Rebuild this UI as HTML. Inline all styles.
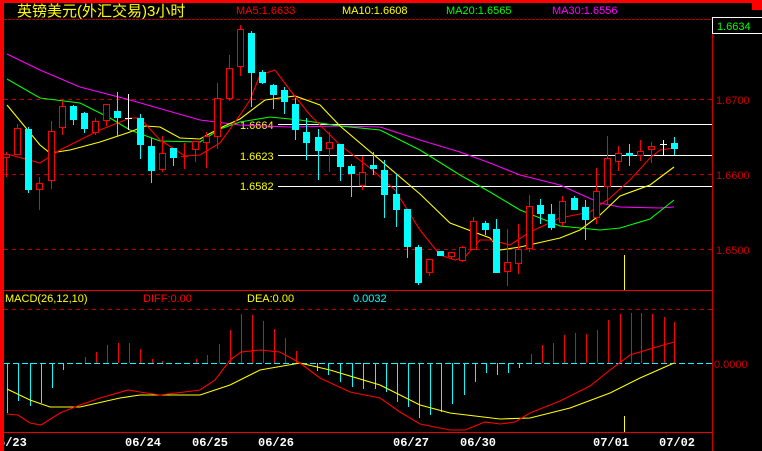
<!DOCTYPE html>
<html><head><meta charset="utf-8"><style>
html,body{margin:0;padding:0;background:#000;width:762px;height:451px;overflow:hidden}
svg{display:block}
text{font-family:"Liberation Sans","Noto Sans CJK SC",sans-serif;font-size:11px}
.d{font-family:"Liberation Mono",monospace;font-weight:bold;font-size:12px;fill:#fff}
</style></head><body>
<svg width="762" height="451" viewBox="0 0 762 451" shape-rendering="crispEdges">
<rect width="762" height="451" fill="#000"/>
<rect x="0" y="0" width="762" height="3" fill="#f00"/>
<rect x="0" y="0" width="4" height="451" fill="#f00"/>
<rect x="752" y="0" width="10" height="10" fill="#f00"/>
<text x="17" y="16" style="font-size:15px" fill="#ff0">英镑美元(外汇交易)3小时</text>
<text x="236" y="14" fill="#f00">MA5:1.6633</text>
<text x="342" y="14" fill="#ff0">MA10:1.6608</text>
<text x="446" y="14" fill="#0f0">MA20:1.6565</text>
<text x="552" y="14" fill="#f0f">MA30:1.6556</text>
<line x1="4" y1="19.5" x2="712" y2="19.5" stroke="#a00" stroke-dasharray="3,1"/>
<line x1="712.5" y1="19" x2="712.5" y2="451" stroke="#c00"/>
<rect x="712.5" y="17.5" width="50" height="16" fill="#000" stroke="#fff"/>
<text x="717" y="30" fill="#0f0">1.6634</text>
<g stroke="#b00" stroke-dasharray="4,4">
<line x1="4" y1="99.5" x2="712" y2="99.5"/><line x1="4" y1="174.5" x2="712" y2="174.5"/><line x1="4" y1="249.5" x2="712" y2="249.5"/>
<line x1="4" y1="309.5" x2="712" y2="309.5"/>
</g>
<text x="716" y="104" fill="#c00">1.6700</text>
<text x="716" y="179" fill="#c00">1.6600</text>
<text x="716" y="254" fill="#c00">1.6500</text>
<g stroke="#fff"><line x1="278" y1="124.5" x2="712" y2="124.5"/><line x1="278" y1="155.5" x2="712" y2="155.5"/><line x1="278" y1="186.5" x2="712" y2="186.5"/></g>
<text x="240" y="129" fill="#ff0">1.6664</text>
<text x="240" y="160" fill="#ff0">1.6623</text>
<text x="240" y="190" fill="#ff0">1.6582</text>
<line x1="4" y1="290.5" x2="712" y2="290.5" stroke="#e00"/>
<line x1="4" y1="432.5" x2="712" y2="432.5" stroke="#e00"/>
<line x1="624.5" y1="255" x2="624.5" y2="290" stroke="#ff0"/>
<line x1="624.5" y1="416" x2="624.5" y2="432" stroke="#ff0"/>
<g shape-rendering="auto" fill="none" stroke-width="1.1">
<polyline stroke="#f0f" points="7,54 40,70 80,87 130,100 200,120 240,125 290,127 340,126 380,127 420,140 460,152 490,163 520,175 560,185 600,203 620,207 660,208 674,207"/>
<polyline stroke="#0f0" points="7,79 40,98 80,103 110,118 130,130 160,141 200,142 220,129 240,122 270,117 300,120 340,126 380,130 420,150 460,175 490,192 520,210 560,226 600,230 620,228 650,219 674,200"/>
<polyline stroke="#ff0" points="7,105 40,145 50,153 70,150 100,142 130,132 145,126 160,127 180,138 200,139 220,128 240,119 265,100 295,96 320,105 340,126 380,160 420,194 450,223 490,238 500,250 520,247 560,238 580,230 600,215 620,196 650,185 674,167"/>
<polyline stroke="#f00" points="7,154 40,163 60,150 100,130 130,118 140,118 160,140 185,156 200,155 220,143 240,115 250,100 260,75 275,70 290,90 310,115 340,145 370,168 395,190 420,230 440,255 455,260 465,257 480,240 490,240 510,245 530,232 560,218 590,212 610,198 630,180 650,158 660,150 674,148"/>
</g>
<g stroke="#f00" fill="#000">
<line x1="6.5" y1="152" x2="6.5" y2="177"/><rect x="3.5" y="154.5" width="6" height="3"/>
<line x1="17.5" y1="124" x2="17.5" y2="155"/><rect x="14.5" y="128.5" width="6" height="26"/>
<line x1="39.5" y1="177" x2="39.5" y2="210"/><rect x="36.5" y="183.5" width="6" height="6"/>
<line x1="51.5" y1="121" x2="51.5" y2="189"/><rect x="48.5" y="131.5" width="6" height="49"/>
<line x1="62.5" y1="101" x2="62.5" y2="135"/><rect x="59.5" y="106.5" width="6" height="21"/>
<line x1="95.5" y1="118" x2="95.5" y2="135"/><rect x="92.5" y="121.5" width="6" height="11"/>
<line x1="106.5" y1="104" x2="106.5" y2="126"/><rect x="103.5" y="104.5" width="6" height="16"/>
<line x1="162.5" y1="136" x2="162.5" y2="172"/><rect x="159.5" y="153.5" width="6" height="16"/>
<line x1="184.5" y1="143" x2="184.5" y2="169"/><line x1="181" y1="156.5" x2="188" y2="156.5"/>
<line x1="195.5" y1="141" x2="195.5" y2="162"/><rect x="192.5" y="141.5" width="6" height="8"/>
<line x1="206.5" y1="132" x2="206.5" y2="168"/><rect x="203.5" y="136.5" width="6" height="6"/>
<line x1="217.5" y1="83" x2="217.5" y2="149"/><rect x="214.5" y="98.5" width="6" height="38"/>
<line x1="229.5" y1="55" x2="229.5" y2="101"/><rect x="226.5" y="68.5" width="6" height="30"/>
<line x1="240.5" y1="25" x2="240.5" y2="76"/><rect x="237.5" y="29.5" width="6" height="37"/>
<line x1="329.5" y1="132" x2="329.5" y2="172"/><rect x="326.5" y="142.5" width="6" height="6"/>
<line x1="362.5" y1="156" x2="362.5" y2="190"/><rect x="359.5" y="172.5" width="6" height="13"/>
<line x1="429.5" y1="259" x2="429.5" y2="276"/><rect x="426.5" y="259.5" width="6" height="13"/>
<line x1="451.5" y1="252" x2="451.5" y2="259"/><rect x="448.5" y="252.5" width="6" height="4"/>
<line x1="462.5" y1="246" x2="462.5" y2="262"/><rect x="459.5" y="247.5" width="6" height="13"/>
<line x1="473.5" y1="217" x2="473.5" y2="250"/><rect x="470.5" y="221.5" width="6" height="28"/>
<line x1="507.5" y1="229" x2="507.5" y2="286"/><rect x="504.5" y="262.5" width="6" height="9"/>
<line x1="518.5" y1="224" x2="518.5" y2="274"/><rect x="515.5" y="249.5" width="6" height="14"/>
<line x1="529.5" y1="195" x2="529.5" y2="252"/><rect x="526.5" y="206.5" width="6" height="42"/>
<line x1="562.5" y1="196" x2="562.5" y2="226"/><rect x="559.5" y="201.5" width="6" height="21"/>
<line x1="596.5" y1="168" x2="596.5" y2="224"/><rect x="593.5" y="191.5" width="6" height="26"/>
<line x1="607.5" y1="136" x2="607.5" y2="205"/><rect x="604.5" y="158.5" width="6" height="28"/>
<line x1="618.5" y1="146" x2="618.5" y2="171"/><rect x="615.5" y="153.5" width="6" height="8"/>
<line x1="640.5" y1="140" x2="640.5" y2="161"/><rect x="637.5" y="151.5" width="6" height="4"/>
<line x1="651.5" y1="142" x2="651.5" y2="163"/><rect x="648.5" y="146.5" width="6" height="3"/>
</g>
<g stroke="#fff"><line x1="128.5" y1="94" x2="128.5" y2="130"/><line x1="125" y1="118.5" x2="132" y2="118.5"/>
<line x1="663.5" y1="140" x2="663.5" y2="155"/><line x1="660" y1="144.5" x2="667" y2="144.5"/></g>
<g stroke="#0ff" fill="#0ff">
<line x1="28.5" y1="127" x2="28.5" y2="193"/><rect x="25" y="129" width="7" height="61" stroke="none"/>
<line x1="73.5" y1="105" x2="73.5" y2="125"/><rect x="70" y="106" width="7" height="14" stroke="none"/>
<line x1="84.5" y1="112" x2="84.5" y2="133"/><rect x="81" y="113" width="7" height="16" stroke="none"/>
<line x1="117.5" y1="92" x2="117.5" y2="137"/><rect x="114" y="111" width="7" height="7" stroke="none"/>
<line x1="140.5" y1="114" x2="140.5" y2="159"/><rect x="137" y="118" width="7" height="27" stroke="none"/>
<line x1="151.5" y1="138" x2="151.5" y2="183"/><rect x="148" y="146" width="7" height="25" stroke="none"/>
<line x1="173.5" y1="148" x2="173.5" y2="166"/><rect x="170" y="148" width="7" height="10" stroke="none"/>
<line x1="251.5" y1="31" x2="251.5" y2="107"/><rect x="248" y="33" width="7" height="40" stroke="none"/>
<line x1="262.5" y1="70" x2="262.5" y2="84"/><rect x="259" y="72" width="7" height="11" stroke="none"/>
<line x1="273.5" y1="84" x2="273.5" y2="109"/><rect x="270" y="85" width="7" height="10" stroke="none"/>
<line x1="284.5" y1="87" x2="284.5" y2="114"/><rect x="281" y="90" width="7" height="12" stroke="none"/>
<line x1="295.5" y1="98" x2="295.5" y2="140"/><rect x="292" y="104" width="7" height="26" stroke="none"/>
<line x1="306.5" y1="118" x2="306.5" y2="160"/><rect x="303" y="132" width="7" height="11" stroke="none"/>
<line x1="318.5" y1="129" x2="318.5" y2="180"/><rect x="315" y="137" width="7" height="14" stroke="none"/>
<line x1="340.5" y1="144" x2="340.5" y2="181"/><rect x="337" y="144" width="7" height="23" stroke="none"/>
<line x1="351.5" y1="164" x2="351.5" y2="197"/><rect x="348" y="166" width="7" height="8" stroke="none"/>
<line x1="373.5" y1="152" x2="373.5" y2="175"/><rect x="370" y="165" width="7" height="4" stroke="none"/>
<line x1="384.5" y1="160" x2="384.5" y2="218"/><rect x="381" y="170" width="7" height="25" stroke="none"/>
<line x1="396.5" y1="174" x2="396.5" y2="227"/><rect x="393" y="194" width="7" height="16" stroke="none"/>
<line x1="407.5" y1="209" x2="407.5" y2="258"/><rect x="404" y="209" width="7" height="38" stroke="none"/>
<line x1="418.5" y1="245" x2="418.5" y2="285"/><rect x="415" y="247" width="7" height="36" stroke="none"/>
<rect x="437" y="251" width="7" height="5" stroke="none"/>
<line x1="485.5" y1="221" x2="485.5" y2="235"/><rect x="482" y="223" width="7" height="7" stroke="none"/>
<line x1="496.5" y1="219" x2="496.5" y2="273"/><rect x="493" y="229" width="7" height="44" stroke="none"/>
<line x1="540.5" y1="199" x2="540.5" y2="224"/><rect x="537" y="205" width="7" height="9" stroke="none"/>
<line x1="551.5" y1="204" x2="551.5" y2="230"/><rect x="548" y="214" width="7" height="14" stroke="none"/>
<line x1="574.5" y1="196" x2="574.5" y2="210"/><rect x="571" y="198" width="7" height="12" stroke="none"/>
<line x1="585.5" y1="200" x2="585.5" y2="240"/><rect x="582" y="207" width="7" height="13" stroke="none"/>
<line x1="629.5" y1="144" x2="629.5" y2="166"/><rect x="626" y="153" width="7" height="3" stroke="none"/>
<line x1="674.5" y1="137" x2="674.5" y2="155"/><rect x="671" y="143" width="7" height="6" stroke="none"/>
</g>
<text x="5" y="302" fill="#ff0">MACD(26,12,10)</text>
<text x="143" y="302" fill="#f00">DIFF:0.00</text>
<text x="247" y="302" fill="#ff0">DEA:0.00</text>
<text x="353" y="302" fill="#0ff">0.0032</text>
<text x="714" y="368" fill="#c00">0.0000</text>
<line x1="4" y1="363.5" x2="712" y2="363.5" stroke="#0ff" stroke-dasharray="6,3"/>
<g stroke="#f00">
<line x1="85.5" y1="357" x2="85.5" y2="363"/><line x1="96.5" y1="352" x2="96.5" y2="363"/><line x1="107.5" y1="345" x2="107.5" y2="363"/><line x1="118.5" y1="343" x2="118.5" y2="363"/><line x1="129.5" y1="343" x2="129.5" y2="363"/><line x1="140.5" y1="349" x2="140.5" y2="363"/><line x1="152.5" y1="359" x2="152.5" y2="363"/><line x1="162.5" y1="361" x2="162.5" y2="363"/><line x1="196.5" y1="359" x2="196.5" y2="363"/><line x1="207.5" y1="355" x2="207.5" y2="363"/><line x1="219.5" y1="344" x2="219.5" y2="363"/><line x1="230.5" y1="330" x2="230.5" y2="363"/><line x1="241.5" y1="314" x2="241.5" y2="363"/><line x1="252.5" y1="315" x2="252.5" y2="363"/><line x1="263.5" y1="321" x2="263.5" y2="363"/><line x1="274.5" y1="329" x2="274.5" y2="363"/><line x1="285.5" y1="338" x2="285.5" y2="363"/><line x1="296.5" y1="351" x2="296.5" y2="363"/>
<line x1="531.5" y1="354" x2="531.5" y2="363"/><line x1="542.5" y1="345" x2="542.5" y2="363"/><line x1="553.5" y1="343" x2="553.5" y2="363"/><line x1="564.5" y1="335" x2="564.5" y2="363"/><line x1="575.5" y1="333" x2="575.5" y2="363"/><line x1="586.5" y1="334" x2="586.5" y2="363"/><line x1="597.5" y1="330" x2="597.5" y2="363"/><line x1="608.5" y1="320" x2="608.5" y2="363"/><line x1="620.5" y1="314" x2="620.5" y2="363"/><line x1="631.5" y1="313" x2="631.5" y2="363"/><line x1="641.5" y1="313" x2="641.5" y2="363"/><line x1="652.5" y1="314" x2="652.5" y2="363"/><line x1="664.5" y1="317" x2="664.5" y2="363"/><line x1="674.5" y1="322" x2="674.5" y2="363"/>
</g>
<g stroke="#0ff">
<line x1="7.5" y1="363" x2="7.5" y2="413"/><line x1="18.5" y1="363" x2="18.5" y2="401"/><line x1="30.5" y1="363" x2="30.5" y2="406"/><line x1="41.5" y1="363" x2="41.5" y2="403"/><line x1="52.5" y1="363" x2="52.5" y2="388"/><line x1="63.5" y1="363" x2="63.5" y2="370"/>
<line x1="317.5" y1="363" x2="317.5" y2="371"/><line x1="328.5" y1="363" x2="328.5" y2="375"/><line x1="340.5" y1="363" x2="340.5" y2="382"/><line x1="352.5" y1="363" x2="352.5" y2="387"/><line x1="363.5" y1="363" x2="363.5" y2="389"/><line x1="375.5" y1="363" x2="375.5" y2="389"/><line x1="386.5" y1="363" x2="386.5" y2="392"/><line x1="397.5" y1="363" x2="397.5" y2="402"/><line x1="408.5" y1="363" x2="408.5" y2="407"/><line x1="419.5" y1="363" x2="419.5" y2="418"/><line x1="430.5" y1="363" x2="430.5" y2="415"/><line x1="441.5" y1="363" x2="441.5" y2="412"/><line x1="452.5" y1="363" x2="452.5" y2="404"/><line x1="464.5" y1="363" x2="464.5" y2="395"/><line x1="475.5" y1="363" x2="475.5" y2="382"/><line x1="486.5" y1="363" x2="486.5" y2="373"/><line x1="497.5" y1="363" x2="497.5" y2="375"/><line x1="508.5" y1="363" x2="508.5" y2="373"/><line x1="519.5" y1="363" x2="519.5" y2="368"/>
</g>
<g shape-rendering="auto" fill="none" stroke-width="1.1">
<polyline stroke="#ff0" points="7,389 30,400 50,407 80,407 120,398 140,395 200,395 230,385 260,370 300,363 330,370 380,385 420,405 450,413 500,419 530,418 570,408 610,393 640,378 674,363"/>
<polyline stroke="#f00" points="7,414 18,415 30,423 41,425 60,413 80,405 100,398 128,390 140,392 160,395 200,390 215,380 230,360 241,352 260,350 280,352 300,363 320,378 350,392 380,398 400,412 420,424 450,430 465,430 485,422 500,424 515,422 530,413 560,401 590,386 610,370 630,355 660,346 674,342"/>
</g>
<text class="d" x="-2" y="446">5/23</text>
<text class="d" x="125" y="446">06/24</text>
<text class="d" x="192" y="446">06/25</text>
<text class="d" x="258" y="446">06/26</text>
<text class="d" x="393" y="446">06/27</text>
<text class="d" x="460" y="446">06/30</text>
<text class="d" x="593" y="446">07/01</text>
<text class="d" x="659" y="446">07/02</text>
<rect x="0" y="0" width="4" height="451" fill="#f00"/>
</svg>
</body></html>
